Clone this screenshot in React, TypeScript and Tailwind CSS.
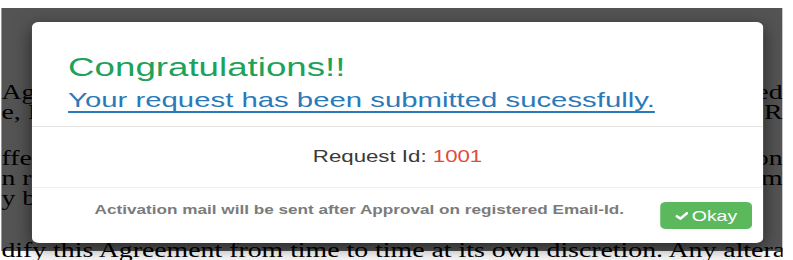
import React from 'react';

function CheckIcon() {
  return (
    <svg viewBox="0 0 9 8" className="w-[9px] h-[8px]" preserveAspectRatio="none">
      <path d="M1 4.2 L3.5 6.6 L8.2 1.2" fill="none" stroke="white" strokeWidth="2.2" strokeLinecap="square" />
    </svg>
  );
}

function Line({ start, end }: { start: string; end?: string }) {
  return (
    <div className="flex justify-between whitespace-nowrap">
      <span>{start}</span>
      {end && <span>{end}</span>}
    </div>
  );
}

export default function App() {
  return (
    <div className="w-[793px] h-[260px] overflow-hidden bg-white">
      {/* the whole shot is stretched sideways, so draw narrow and widen */}
      <div className="relative w-[570.5px] h-[260px] origin-top-left scale-x-[1.39]">
        <div className="relative w-[563px] h-[260px] overflow-hidden pt-[82px] pl-[1px] text-[20px] leading-[20px] text-black font-['Liberation_Serif',serif]">
          <div>
            <Line start="Agreement sets forth the binding" end="terms of use as described" />
            <Line start="e, Inc. and all the users" end="of its services, hereafter 'R" />
          </div>
          <div className="mt-[26px]">
            <Line start="ffective immediately upon" end="posting of revised terms on" />
            <Line start="n relation to any services" end="offered under these terms and form" />
            <Line start="y both parties." />
          </div>
          <div className="mt-[32px] whitespace-nowrap">dify this Agreement from time to time at its own discretion. Any alteration or modification</div>

          {/* backdrop */}
          <div className="absolute left-[1px] right-0 top-[8px] h-[243px] bg-black/[0.67]" />

          {/* modal */}
          <div className="absolute left-[23px] top-[22px] w-[526px] bg-white rounded-[5px] shadow-[0_5px_15px_rgba(0,0,0,0.5)] font-['Liberation_Sans',Arial,sans-serif]">
            <div className="pt-[30px] pb-[14px] pl-[26px] border-b border-[#e5e5e5]">
              <h2 className="text-[26.4px] leading-[30px] text-[#1ca25b]">Congratulations!!</h2>
              <a className="block mt-[6px] text-[21.1px] leading-[24px] text-[#2a7ab9] underline decoration-[2px] underline-offset-[4px] decoration-[#2a7ab9]">
                Your request has been submitted sucessfully.
              </a>
            </div>
            <div className="py-[20px] text-center text-[16px] leading-[20px] text-[#3a3a3a]">
              Request Id: <span className="text-[#e14b3b]">1001</span>
            </div>
            <div className="flex items-start pt-[14px] pb-[14px] pl-[45px] pr-[8px] border-t border-[#eeeeee]">
              <p className="text-[12.35px] leading-[17px] font-bold text-[#7b7b7b]">
                Activation mail will be sent after Approval on registered Email-Id.
              </p>
              <button className="ml-auto h-[27px] w-[66px] flex items-center justify-center gap-[3px] bg-[#5cb85c] rounded-[4px] text-white text-[14px]">
                <CheckIcon />
                Okay
              </button>
            </div>
          </div>
        </div>
      </div>
    </div>
  );
}
